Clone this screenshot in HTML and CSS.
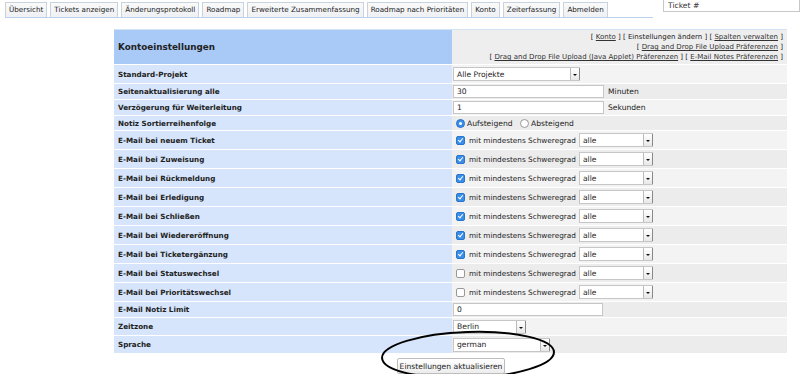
FILE: index.html
```html
<!DOCTYPE html>
<html lang="de">
<head>
    <meta charset="UTF-8" />
    <title>Konto</title>
    <link rel="stylesheet" href="styles.css">
</head>
<body>
    <div class="topbar">
        <ul class="tabs">
            <li>Übersicht</li>
            <li>Tickets anzeigen</li>
            <li>Änderungsprotokoll</li>
            <li>Roadmap</li>
            <li>Erweiterte Zusammenfassung</li>
            <li>Roadmap nach Prioritäten</li>
            <li>Konto</li>
            <li>Zeiterfassung</li>
            <li>Abmelden</li>
        </ul>
        <input class="jump" type="text" placeholder="Ticket #">
    </div>

    <form class="account">
        <table class="prefs">
            <tr class="head">
                <td class="label">Kontoeinstellungen</td>
                <td class="links">
                    [ <a href="#">Konto</a> ] [ Einstellungen ändern ] [ <a href="#">Spalten verwalten</a> ]<br>
                    [ <a href="#">Drag and Drop File Upload Präferenzen</a> ]<br>
                    [ <a href="#">Drag and Drop File Upload (Java Applet) Präferenzen</a> ] [ <a href="#">E-Mail Notes Präferenzen</a> ]
                </td>
            </tr>
            <tr class="h19">
                <td class="label">Standard-Projekt</td>
                <td class="value"><span class="select w127"><span class="txt">Alle Projekte</span><span class="arrow"></span></span></td>
            </tr>
            <tr class="h16">
                <td class="label">Seitenaktualisierung alle</td>
                <td class="value"><span class="field w151">30</span><span class="unit">Minuten</span></td>
            </tr>
            <tr class="h16">
                <td class="label">Verzögerung für Weiterleitung</td>
                <td class="value"><span class="field w151">1</span><span class="unit">Sekunden</span></td>
            </tr>
            <tr class="h15">
                <td class="label">Notiz Sortierreihenfolge</td>
                <td class="value">
                    <span class="radio on"></span><span class="opt">Aufsteigend</span>
                    <span class="radio"></span><span class="opt">Absteigend</span>
                </td>
            </tr>
            <tr class="h19"><td class="label">E-Mail bei neuem Ticket</td><td class="value"><span class="check on"></span><span class="sev">mit mindestens Schweregrad</span><span class="select w74"><span class="txt">alle</span><span class="arrow"></span></span></td></tr>
            <tr class="h19"><td class="label">E-Mail bei Zuweisung</td><td class="value"><span class="check on"></span><span class="sev">mit mindestens Schweregrad</span><span class="select w74"><span class="txt">alle</span><span class="arrow"></span></span></td></tr>
            <tr class="h19"><td class="label">E-Mail bei Rückmeldung</td><td class="value"><span class="check on"></span><span class="sev">mit mindestens Schweregrad</span><span class="select w74"><span class="txt">alle</span><span class="arrow"></span></span></td></tr>
            <tr class="h19"><td class="label">E-Mail bei Erledigung</td><td class="value"><span class="check on"></span><span class="sev">mit mindestens Schweregrad</span><span class="select w74"><span class="txt">alle</span><span class="arrow"></span></span></td></tr>
            <tr class="h19"><td class="label">E-Mail bei Schließen</td><td class="value"><span class="check on"></span><span class="sev">mit mindestens Schweregrad</span><span class="select w74"><span class="txt">alle</span><span class="arrow"></span></span></td></tr>
            <tr class="h19"><td class="label">E-Mail bei Wiedereröffnung</td><td class="value"><span class="check on"></span><span class="sev">mit mindestens Schweregrad</span><span class="select w74"><span class="txt">alle</span><span class="arrow"></span></span></td></tr>
            <tr class="h19"><td class="label">E-Mail bei Ticketergänzung</td><td class="value"><span class="check on"></span><span class="sev">mit mindestens Schweregrad</span><span class="select w74"><span class="txt">alle</span><span class="arrow"></span></span></td></tr>
            <tr class="h19"><td class="label">E-Mail bei Statuswechsel</td><td class="value"><span class="check"></span><span class="sev">mit mindestens Schweregrad</span><span class="select w74"><span class="txt">alle</span><span class="arrow"></span></span></td></tr>
            <tr class="h19"><td class="label">E-Mail bei Prioritätswechsel</td><td class="value"><span class="check"></span><span class="sev">mit mindestens Schweregrad</span><span class="select w74"><span class="txt">alle</span><span class="arrow"></span></span></td></tr>
            <tr class="h16">
                <td class="label">E-Mail Notiz Limit</td>
                <td class="value"><span class="field w150">0</span></td>
            </tr>
            <tr class="h18">
                <td class="label">Zeitzone</td>
                <td class="value"><span class="select w73"><span class="txt">Berlin</span><span class="arrow"></span></span></td>
            </tr>
            <tr class="h18">
                <td class="label">Sprache</td>
                <td class="value"><span class="select w97"><span class="txt">german</span><span class="arrow"></span></span></td>
            </tr>
        </table>
        <div class="actions">
            <span class="button">Einstellungen aktualisieren</span>
        </div>
        <svg class="mark" width="190" height="62" viewBox="0 0 190 62">
            <ellipse cx="95" cy="31" rx="86" ry="23" fill="none" stroke="#000" stroke-width="2" transform="rotate(-2 95 31)"/>
        </svg>
    </form>
</body>
</html>
```

FILE: styles.css
```css
html, body {
    margin: 0;
    padding: 0;
    background: #fff;
    overflow: hidden;
}

body {
    font-family: "DejaVu Sans", Verdana, sans-serif;
    font-size: 8px;
    color: #222;
    width: 800px;
    height: 374px;
    position: relative;
}

.topbar {
    display: flex;
    justify-content: space-between;
    align-items: flex-start;
    padding-left: 5px;
}

.tabs {
    list-style: none;
    margin: 2px 10px 0 0;
    padding: 0;
    display: flex;
    gap: 3px;
    flex: 1;
    border-bottom: 1px solid #bcd3ef;
}

.tabs li {
    height: 14px;
    line-height: 14px;
    padding: 0 3px;
    border: 1px solid #c9d3de;
    border-bottom: none;
    background: linear-gradient(#fafafa, #eef0f3);
    color: #222;
    font-size: 7.2px;
    white-space: nowrap;
}

.jump {
    width: 137px;
    height: 12px;
    box-sizing: border-box;
    margin: 0;
    border: 1px solid #c8c8c8;
    border-top: none;
    padding: 0 0 0 4px;
    font-family: inherit;
    font-size: 7.6px;
    color: #333;
}

.jump::placeholder {
    color: #333;
}

.account {
    margin: 11px 0 0 114px;
    width: 673px;
    position: relative;
}

.prefs {
    width: 673px;
    border-collapse: collapse;
    border-top: 1px solid #d4e2f6;
}

.prefs td {
    padding: 0;
    border-bottom: 1px solid #fff;
    box-sizing: border-box;
}

.prefs td.label {
    width: 338px;
    background: #d6e5fb;
    font-weight: bold;
    font-size: 7.2px;
    padding-left: 4px;
    color: #222;
}

.prefs td.value {
    background: #f3f3f3;
    padding-left: 1px;
    white-space: nowrap;
}

.prefs tr:nth-child(odd) td.value {
    background: #ececec;
}

.prefs .head td.label {
    background: #a9c9f6;
    font-size: 8.8px;
    height: 34px;
    padding-left: 4px;
}

.prefs .head td.links {
    background: #eeeeee;
    text-align: right;
    font-size: 7px;
    line-height: 10px;
    padding: 2px 4px 2px 0;
    color: #222;
}

.links a {
    color: #333;
}

.h19 td { height: 19px; }
.h18 td { height: 18px; }
.h16 td { height: 16px; }
.h15 td { height: 15px; }

.select, .field {
    display: inline-flex;
    align-items: center;
    box-sizing: border-box;
    height: 14px;
    background: #fff;
    border: 1px solid #c6c6c6;
    vertical-align: middle;
    font-size: 7.6px;
    color: #222;
}

.h16 .field {
    height: 13px;
}

.field {
    padding-left: 3px;
}

.select .txt {
    flex: 1;
    padding-left: 3px;
}

.select .arrow {
    width: 8px;
    height: 12px;
    border-left: 1px solid #bbb;
    background: linear-gradient(#fff, #e8e8e8);
    position: relative;
    box-shadow: 1px 0 0 #888;
}

.select .arrow::after {
    content: '';
    position: absolute;
    left: 2px;
    top: 6px;
    border-left: 2px solid transparent;
    border-right: 2px solid transparent;
    border-top: 2px solid #111;
}

.w127 { width: 127px; }
.w151 { width: 151px; }
.w150 { width: 150px; }
.w74 { width: 74px; }
.w73 { width: 73px; }
.w97 { width: 97px; }

.unit {
    font-size: 7.6px;
    margin-left: 4px;
    vertical-align: middle;
}

.radio, .check {
    display: inline-block;
    width: 9px;
    height: 9px;
    box-sizing: border-box;
    border: 1px solid #999;
    background: #fff;
    vertical-align: middle;
    margin-left: 3px;
    position: relative;
}

.radio {
    border-radius: 50%;
}

.radio.on {
    background: #3b8ee8;
    border-color: #2a74cc;
}

.radio.on::after {
    content: '';
    position: absolute;
    left: 2px;
    top: 2px;
    width: 3px;
    height: 3px;
    border-radius: 50%;
    background: #fff;
}

.check {
    border-radius: 2px;
}

.check.on {
    background: #3b8ee8;
    border-color: #2a74cc;
}

.check.on::after {
    content: '';
    position: absolute;
    left: 2px;
    top: 0;
    width: 2px;
    height: 4px;
    border-right: 1.5px solid #fff;
    border-bottom: 1.5px solid #fff;
    transform: rotate(40deg);
}

.opt {
    font-size: 7.6px;
    margin-left: 2px;
    margin-right: 2px;
    vertical-align: middle;
}

.sev {
    font-size: 7.3px;
    margin-left: 4px;
    margin-right: 3px;
    vertical-align: middle;
}

.actions {
    padding: 4px 0 0 283px;
}

.button {
    display: inline-block;
    width: 108px;
    height: 16px;
    line-height: 15px;
    box-sizing: border-box;
    border: 1px solid #bdbdbd;
    border-radius: 2px;
    background: linear-gradient(#fff, #ececec);
    text-align: center;
    font-size: 7.6px;
    color: #222;
}

.mark {
    position: absolute;
    left: 259px;
    top: 295px;
}
```
